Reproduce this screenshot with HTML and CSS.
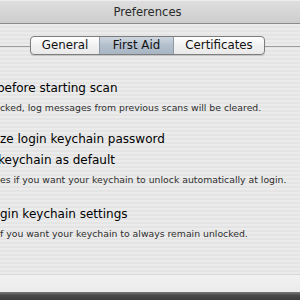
FILE: index.html
```html
<!DOCTYPE html>
<html>
<head>
<meta charset="utf-8">
<link rel="stylesheet" href="styles.css">
</head>
<body>
<div class="window">
  <div class="titlebar">Preferences</div>
  <div class="content">
    <div class="tabrow">
      <div class="rule rule-left"></div>
      <div class="tabs">
        <div class="tab tab-general">General</div>
        <div class="tab tab-selected">First Aid</div>
        <div class="tab tab-cert">Certificates</div>
      </div>
      <div class="rule rule-right"></div>
    </div>
    <div class="opt l1">before starting scan</div>
    <div class="note n1">cked, log messages from previous scans will be cleared.</div>
    <div class="opt l2">ze login keychain password</div>
    <div class="opt l3">keychain as default</div>
    <div class="note n2">es if you want your keychain to unlock automatically at login.</div>
    <div class="opt l4">gin keychain settings</div>
    <div class="note n3">f you want your keychain to always remain unlocked.</div>
  </div>
  <div class="bottombar"></div>
</div>
<div class="desktop"></div>
</body>
</html>
```
FILE: styles.css
```css
html, body {
  margin: 0;
  padding: 0;
  width: 300px;
  height: 300px;
  overflow: hidden;
  font-family: "DejaVu Sans", sans-serif;
}
.window {
  display: flex;
  flex-direction: column;
  height: 292px;
}
.titlebar {
  height: 22px;
  border-top: 1px solid #ededed;
  border-bottom: 1px solid #8a8a8a;
  background: linear-gradient(#dedede, #cdcdcd);
  font-size: 11.6px;
  color: #2a2a2a;
  text-align: center;
  line-height: 22px;
  padding-right: 5px;
}
.content {
  flex: 1;
  overflow: hidden;
  background: repeating-linear-gradient(#ebebeb 0, #ebebeb 2px, #e4e4e4 2px, #e4e4e4 4px);
  padding-top: 12px;
  white-space: nowrap;
}
.tabrow {
  display: flex;
  align-items: center;
  height: 19px;
}
.rule {
  height: 1px;
  background: #9c9c9c;
  margin-top: 1px;
}
.rule-left { flex: 0 0 30px; }
.rule-right { flex: 1; }
.tabs {
  display: flex;
  height: 17px;
  border: 1px solid #7d7d7d;
  border-radius: 4px;
  background: linear-gradient(#ffffff, #f1f1f1 50%, #e9e9e9);
  overflow: hidden;
  box-shadow: 0 1px 1px rgba(0,0,0,0.15);
}
.tab {
  font-size: 11.8px;
  color: #111;
  line-height: 17px;
  text-align: center;
}
.tab-general {
  width: 68px;
  border-right: 1px solid #8f9aa6;
}
.tab-selected {
  width: 73px;
  background: linear-gradient(#cfd7e0, #b3bfcc 50%, #a8b5c3);
  border-right: 1px solid #8f9aa6;
}
.tab-cert {
  width: 90px;
}
.opt {
  font-size: 12px;
  line-height: 16px;
  color: #000;
}
.note {
  font-size: 9.3px;
  line-height: 13px;
  color: #2e2e2e;
}
.l1 { margin-top: 25px; text-indent: -3px; }
.n1 { margin-top: 5px; }
.l2 { margin-top: 17px; }
.l3 { margin-top: 5px; text-indent: -2px; }
.n2 { margin-top: 5px; }
.l4 { margin-top: 20px; }
.n3 { margin-top: 5px; }
.bottombar {
  height: 17px;
  border-top: 1px solid #d6d6d6;
  background: linear-gradient(#f1f1f1, #ebebeb);
}
.desktop {
  height: 8px;
  background: linear-gradient(#7a7a7a, #4a4a4a 40%, #3c3c3c);
}
```
